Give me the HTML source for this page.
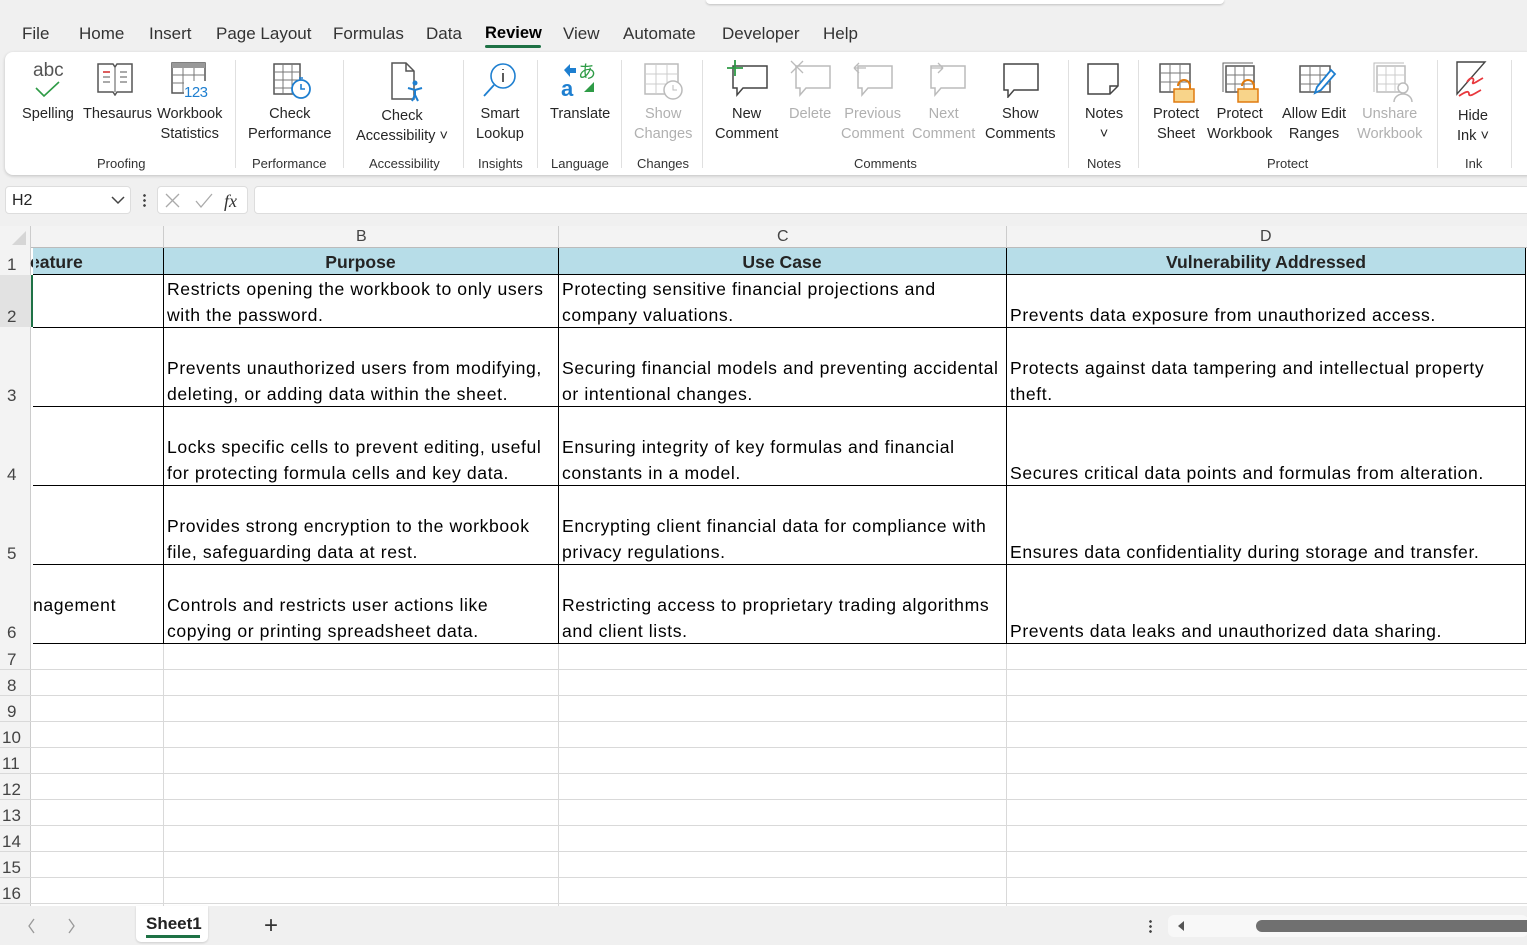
<!DOCTYPE html>
<html><head><meta charset="utf-8">
<style>
*{box-sizing:border-box;margin:0;padding:0}
body{width:1527px;height:945px;overflow:hidden;background:#f0f0f0;font-family:"Liberation Sans",sans-serif;position:relative;color:#242424}
.a{position:absolute}
.tab{position:absolute;top:24px;font-size:17px;color:#333}
.rb{position:absolute;left:5px;top:52px;width:1530px;height:123px;background:#fff;border-radius:8px;box-shadow:0 1px 3px rgba(0,0,0,.2)}
.lbl{position:absolute;font-size:14.6px;line-height:20px;text-align:center;color:#262626;white-space:nowrap}
.dis{color:#b0b0b0}
.grp{position:absolute;top:156px;font-size:13px;color:#333;text-align:center;white-space:nowrap}
.sep{position:absolute;top:60px;width:1px;height:108px;background:#e0e0e0}
.ic{position:absolute;top:58px}
.cell{position:absolute;font-family:"Liberation Sans",sans-serif;font-size:17.6px;letter-spacing:0.6px;line-height:26px;padding-left:4px;display:flex;flex-direction:column;justify-content:flex-end;padding-bottom:0;white-space:nowrap;overflow:hidden;color:#000}
.rh{position:absolute;left:0;width:31px;font-size:17px;color:#444;padding-left:7px;display:flex;align-items:flex-end;padding-bottom:0}
.hl{position:absolute;height:1px;background:#d9d9d9}
.vl{position:absolute;width:1px;background:#d9d9d9}
</style></head><body>
<div class="a" style="left:706px;top:0;width:518px;height:4px;background:#fff;border-radius:0 0 4px 4px;box-shadow:0 1px 2px rgba(0,0,0,.2)"></div>
<div class="tab" style="left:22px">File</div>
<div class="tab" style="left:79px">Home</div>
<div class="tab" style="left:149px">Insert</div>
<div class="tab" style="left:216px">Page Layout</div>
<div class="tab" style="left:333px">Formulas</div>
<div class="tab" style="left:426px">Data</div>
<div class="tab" style="left:485px;color:#000;font-weight:bold;font-size:16.5px">Review</div>
<div class="a" style="left:485px;top:45px;width:56px;height:3px;background:#1e7145;border-radius:2px"></div>
<div class="tab" style="left:563px">View</div>
<div class="tab" style="left:623px">Automate</div>
<div class="tab" style="left:722px">Developer</div>
<div class="tab" style="left:823px">Help</div>

<div class="rb"></div>
<div class="a" style="left:33px;top:60px;font-size:19px;color:#555">abc</div>
<svg class="ic" style="left:34px;top:80px" width="28" height="20"><path d="M2 8 L10 16 L25 2" stroke="#2e9b46" stroke-width="1.6" fill="none"/></svg>
<svg class="ic" style="left:96px;top:62px" width="38" height="34"><path d="M2 2h15l2 3 2-3h15v28H21l-2 3-2-3H2z" fill="#fff" stroke="#555" stroke-width="1.5"/><path d="M19 5v25" stroke="#555"/><path d="M7 10h7M7 15h7M7 20h7M24 10h7M24 15h7M24 20h7" stroke="#777" stroke-width="1.3"/><path d="M7 10h7" stroke="#d33" stroke-width="1.5"/></svg>
<svg class="ic" style="left:170px;top:61px" width="40" height="38"><rect x="2" y="2" width="33" height="30" fill="#fff" stroke="#555" stroke-width="1.5"/><rect x="2" y="2" width="33" height="5" fill="#999"/><path d="M2 14h33M2 22h33M13 7v25M24 7v25" stroke="#777"/><rect x="14" y="20" width="26" height="16" fill="#fff"/><text x="14" y="36" font-size="15" fill="#1e7fd0" font-family="Liberation Sans" textLength="24">123</text></svg>
<svg class="ic" style="left:272px;top:62px" width="40" height="40"><rect x="2" y="2" width="26" height="30" fill="#fff" stroke="#555" stroke-width="1.5"/><path d="M2 10h26M2 18h26M2 26h26M11 2v30M20 2v30" stroke="#777"/><circle cx="29" cy="27" r="9" fill="#fff" stroke="#1e7fd0" stroke-width="1.8"/><path d="M29 22v5h4M27 16h4" stroke="#1e7fd0" stroke-width="1.6" fill="none"/></svg>
<svg class="ic" style="left:390px;top:61px" width="36" height="42"><path d="M2 2h14l8 8v28H2z" fill="#fff" stroke="#555" stroke-width="1.5"/><path d="M16 2v8h8" fill="none" stroke="#555" stroke-width="1.5"/><circle cx="25" cy="22" r="2.5" fill="#1e7fd0"/><path d="M18 27l7 2 7-2M25 29v5l-3 6M25 34l3 6" stroke="#1e7fd0" stroke-width="2" fill="none"/></svg>
<svg class="ic" style="left:481px;top:60px" width="40" height="40"><circle cx="22" cy="16" r="12" fill="#fff" stroke="#1e7fd0" stroke-width="1.6"/><path d="M22 13v9M22 9v1" stroke="#333" stroke-width="1.6"/><path d="M13 25L3 36" stroke="#1e7fd0" stroke-width="1.8"/></svg>
<svg class="ic" style="left:560px;top:60px" width="40" height="40"><path d="M4 10l6-6v4h6v5h-6v4z" fill="#1e7fd0"/><text x="1" y="36" font-size="22" font-weight="bold" fill="#1e7fd0" font-family="Liberation Sans">a</text><text x="18" y="18" font-size="18" fill="#2e9b46" font-family="Noto Sans CJK JP">あ</text><path d="M34 22v10h-10z" fill="#2e9b46"/></svg>
<svg class="ic" style="left:643px;top:62px" width="40" height="40"><rect x="2" y="2" width="33" height="30" fill="#fff" stroke="#bbb" stroke-width="1.5"/><path d="M2 12h33M2 22h33M13 2v30M24 2v30" stroke="#ccc"/><circle cx="30" cy="28" r="9" fill="#fff" stroke="#bbb" stroke-width="1.5"/><path d="M30 23v5h4" stroke="#bbb" fill="none"/></svg>
<svg class="ic" style="left:727px;top:60px" width="42" height="38"><path d="M6 6h34v22H16l-6 7v-7H6z" fill="#fff" stroke="#444" stroke-width="1.5"/><path d="M8 0v16M0 8h16" stroke="#2e9b46" stroke-width="1.8"/></svg>
<svg class="ic" style="left:790px;top:60px" width="42" height="38"><path d="M6 6h34v22H16l-6 7v-7H6z" fill="#fff" stroke="#bbb" stroke-width="1.5"/><path d="M1 1l12 12M13 1L1 13" stroke="#bbb" stroke-width="1.3"/></svg>
<svg class="ic" style="left:852px;top:60px" width="42" height="38"><path d="M6 6h34v22H16l-6 7v-7H6z" fill="#fff" stroke="#bbb" stroke-width="1.5"/><path d="M2 8h12M2 8l5-5M2 8l5 5" stroke="#bbb" stroke-width="1.3" fill="none"/></svg>
<svg class="ic" style="left:925px;top:60px" width="42" height="38"><path d="M6 6h34v22H16l-6 7v-7H6z" fill="#fff" stroke="#bbb" stroke-width="1.5"/><path d="M6 8h12M18 8l-5-5M18 8l-5 5" stroke="#bbb" stroke-width="1.3" fill="none"/></svg>
<svg class="ic" style="left:1000px;top:60px" width="42" height="38"><path d="M4 4h34v26H14l-6 7v-7H4z" fill="#fff" stroke="#444" stroke-width="1.5"/></svg>
<svg class="ic" style="left:1086px;top:62px" width="36" height="36"><path d="M2 2h30v22l-8 8H2z" fill="#fff" stroke="#444" stroke-width="1.5"/><path d="M32 24h-8v8" fill="none" stroke="#444" stroke-width="1.5"/></svg>
<svg class="ic" style="left:1158px;top:62px" width="40" height="42"><rect x="2" y="2" width="30" height="28" fill="#fff" stroke="#555" stroke-width="1.5"/><path d="M2 11h30M2 20h30M12 2v28M22 2v28" stroke="#777"/><path d="M20 24a6 6 0 0112 0v4" fill="none" stroke="#e07b10" stroke-width="2"/><rect x="16" y="27" width="20" height="13" fill="#f8d48a" stroke="#e07b10" stroke-width="1.5"/></svg>
<svg class="ic" style="left:1222px;top:62px" width="40" height="42"><path d="M1 30V1h30" fill="none" stroke="#666"/><rect x="4" y="4" width="28" height="26" fill="#fff" stroke="#555" stroke-width="1.5"/><path d="M4 13h28M4 22h28M13 4v26M22 4v26" stroke="#777"/><path d="M20 24a6 6 0 0112 0v4" fill="none" stroke="#e07b10" stroke-width="2"/><rect x="16" y="27" width="20" height="13" fill="#f8d48a" stroke="#e07b10" stroke-width="1.5"/></svg>
<svg class="ic" style="left:1298px;top:62px" width="40" height="42"><rect x="2" y="4" width="30" height="26" fill="#fff" stroke="#555" stroke-width="1.5"/><path d="M2 13h30M2 22h30M12 4v26M22 4v26" stroke="#777"/><path d="M33 8l4 4-14 16-6 3 2-6z" fill="#fff" stroke="#1e7fd0" stroke-width="1.8"/></svg>
<svg class="ic" style="left:1373px;top:62px" width="40" height="42"><path d="M1 30V1h30" fill="none" stroke="#bbb"/><rect x="4" y="4" width="28" height="26" fill="#fff" stroke="#bbb" stroke-width="1.5"/><path d="M4 13h28M4 22h28M13 4v26M22 4v26" stroke="#ccc"/><circle cx="30" cy="26" r="5" fill="#fff" stroke="#bbb" stroke-width="1.5"/><path d="M21 40a9 8 0 0118 0" fill="#fff" stroke="#bbb" stroke-width="1.5"/></svg>
<svg class="ic" style="left:1455px;top:60px" width="40" height="40"><path d="M2 2h28L2 34z" fill="#fff" stroke="#444" stroke-width="1.4"/><path d="M12 22c4-6 8-4 6 0s6-2 10-4M4 36c6-4 10-6 10-2s8-2 12-4" stroke="#e8383d" stroke-width="1.8" fill="none"/></svg>

<div class="lbl" style="left:22px;top:104px">Spelling</div>
<div class="lbl" style="left:83px;top:104px">Thesaurus</div>
<div class="lbl" style="left:157px;top:104px">Workbook<br>Statistics</div>
<div class="lbl" style="left:248px;top:104px">Check<br>Performance</div>
<div class="lbl" style="left:356px;top:106px">Check<br>Accessibility ˅</div>
<div class="lbl" style="left:476px;top:104px">Smart<br>Lookup</div>
<div class="lbl" style="left:550px;top:104px">Translate</div>
<div class="lbl dis" style="left:634px;top:104px">Show<br>Changes</div>
<div class="lbl" style="left:715px;top:104px">New<br>Comment</div>
<div class="lbl dis" style="left:789px;top:104px">Delete</div>
<div class="lbl dis" style="left:841px;top:104px">Previous<br>Comment</div>
<div class="lbl dis" style="left:912px;top:104px">Next<br>Comment</div>
<div class="lbl" style="left:985px;top:104px">Show<br>Comments</div>
<div class="lbl" style="left:1085px;top:104px">Notes<br>˅</div>
<div class="lbl" style="left:1153px;top:104px">Protect<br>Sheet</div>
<div class="lbl" style="left:1207px;top:104px">Protect<br>Workbook</div>
<div class="lbl" style="left:1282px;top:104px">Allow Edit<br>Ranges</div>
<div class="lbl dis" style="left:1357px;top:104px">Unshare<br>Workbook</div>
<div class="lbl" style="left:1457px;top:106px">Hide<br>Ink ˅</div>

<div class="grp" style="left:97px">Proofing</div>
<div class="grp" style="left:252px">Performance</div>
<div class="grp" style="left:369px">Accessibility</div>
<div class="grp" style="left:478px">Insights</div>
<div class="grp" style="left:551px">Language</div>
<div class="grp" style="left:637px">Changes</div>
<div class="grp" style="left:854px">Comments</div>
<div class="grp" style="left:1087px">Notes</div>
<div class="grp" style="left:1267px">Protect</div>
<div class="grp" style="left:1465px">Ink</div>
<div class="sep" style="left:235px"></div><div class="sep" style="left:343px"></div><div class="sep" style="left:463px"></div><div class="sep" style="left:537px"></div><div class="sep" style="left:621px"></div><div class="sep" style="left:702px"></div><div class="sep" style="left:1068px"></div><div class="sep" style="left:1138px"></div><div class="sep" style="left:1437px"></div><div class="sep" style="left:1511px"></div>

<div class="a" style="left:5px;top:186px;width:126px;height:28px;background:#fff;border:1px solid #ddd;border-radius:4px;font-size:16px;padding:5px 6px">H2</div>
<svg class="a" style="left:110px;top:194px" width="16" height="12"><path d="M2 3l6 6 6-6" stroke="#444" stroke-width="1.5" fill="none"/></svg>
<div class="a" style="left:143px;top:193px;width:3px;height:14px;background:radial-gradient(circle,#444 1.2px,transparent 1.5px) 0 0/3px 5px"></div>
<div class="a" style="left:157px;top:186px;width:91px;height:28px;background:#fff;border:1px solid #ddd;border-radius:4px"></div>
<svg class="a" style="left:163px;top:191px" width="80" height="20"><path d="M3 3l13 13M16 3L3 16" stroke="#aaa" stroke-width="1.3"/><path d="M33 10l5 6 11-13" stroke="#aaa" stroke-width="1.3" fill="none"/><text x="61" y="16" font-size="18" font-style="italic" font-family="Liberation Serif" fill="#333">fx</text></svg>
<div class="a" style="left:254px;top:186px;width:1280px;height:28px;background:#fff;border:1px solid #ddd;border-radius:4px"></div>

<div class="a" style="left:0;top:226px;width:1527px;height:680px;background:#fff"></div>
<div class="a" style="left:0;top:226px;width:1527px;height:22px;background:#f3f3f3;border-bottom:1px solid #bbb"></div>
<div class="a" style="left:0;top:226px;width:31px;height:680px;background:#f3f3f3;border-right:1px solid #ccc"></div>
<svg class="a" style="left:10px;top:230px" width="18" height="16"><path d="M16 1v14H2z" fill="#d6d6d6"/></svg>
<div class="a" style="left:356px;top:228px;font-size:16px;color:#444">B</div>
<div class="a" style="left:777px;top:228px;font-size:16px;color:#444">C</div>
<div class="a" style="left:1260px;top:228px;font-size:16px;color:#444">D</div>
<div class="vl" style="left:163px;top:226px;height:22px;background:#ccc"></div>
<div class="vl" style="left:558px;top:226px;height:22px;background:#ccc"></div>
<div class="vl" style="left:1006px;top:226px;height:22px;background:#ccc"></div>
<div class="a" style="left:0;top:275px;width:31px;height:52px;background:#e2e2e2"></div>
<div class="a" style="left:31px;top:275px;width:2px;height:52px;background:#1e7145"></div>

<div class="vl" style="left:163px;top:643px;height:263px"></div>
<div class="vl" style="left:558px;top:643px;height:263px"></div>
<div class="vl" style="left:1006px;top:643px;height:263px"></div>
<div class="hl" style="left:0;top:669px;width:1527px"></div><div class="hl" style="left:0;top:695px;width:1527px"></div><div class="hl" style="left:0;top:721px;width:1527px"></div><div class="hl" style="left:0;top:747px;width:1527px"></div><div class="hl" style="left:0;top:773px;width:1527px"></div><div class="hl" style="left:0;top:799px;width:1527px"></div><div class="hl" style="left:0;top:825px;width:1527px"></div><div class="hl" style="left:0;top:851px;width:1527px"></div><div class="hl" style="left:0;top:877px;width:1527px"></div><div class="hl" style="left:0;top:903px;width:1527px"></div>

<div class="a" style="left:33px;top:248px;width:1493px;height:27px;background:#b7dde8;border-bottom:1px solid #000"></div>
<div class="a" style="left:30px;top:252px;font-weight:bold;font-size:17.6px">eature</div>
<div class="a" style="left:33px;top:248px;width:3px;height:26px;background:#b7dde8"></div>
<div class="a" style="left:163px;top:252px;width:395px;text-align:center;font-weight:bold;font-size:17.6px">Purpose</div>
<div class="a" style="left:558px;top:252px;width:448px;text-align:center;font-weight:bold;font-size:17.6px">Use Case</div>
<div class="a" style="left:1006px;top:252px;width:520px;text-align:center;font-weight:bold;font-size:17.6px">Vulnerability Addressed</div>
<div class="a" style="left:163px;top:248px;width:1px;height:395px;background:#000"></div>
<div class="a" style="left:558px;top:248px;width:1px;height:395px;background:#000"></div>
<div class="a" style="left:1006px;top:248px;width:1px;height:395px;background:#000"></div>
<div class="a" style="left:1525px;top:248px;width:1px;height:395px;background:#000"></div>
<div class="a" style="left:33px;top:327px;width:1493px;height:1px;background:#000"></div>
<div class="a" style="left:33px;top:406px;width:1493px;height:1px;background:#000"></div>
<div class="a" style="left:33px;top:485px;width:1493px;height:1px;background:#000"></div>
<div class="a" style="left:33px;top:564px;width:1493px;height:1px;background:#000"></div>
<div class="a" style="left:33px;top:643px;width:1493px;height:1px;background:#000"></div>

<div class="rh" style="top:248px;height:27px">1</div>
<div class="rh" style="top:275px;height:52px">2</div>
<div class="rh" style="top:328px;height:78px">3</div>
<div class="rh" style="top:407px;height:78px">4</div>
<div class="rh" style="top:486px;height:78px">5</div>
<div class="rh" style="top:565px;height:78px">6</div>
<div class="rh" style="top:644px;height:26px">7</div>
<div class="rh" style="top:670px;height:26px">8</div>
<div class="rh" style="top:696px;height:26px">9</div>
<div class="rh" style="top:722px;height:26px;padding-left:2px">10</div>
<div class="rh" style="top:748px;height:26px;padding-left:2px">11</div>
<div class="rh" style="top:774px;height:26px;padding-left:2px">12</div>
<div class="rh" style="top:800px;height:26px;padding-left:2px">13</div>
<div class="rh" style="top:826px;height:26px;padding-left:2px">14</div>
<div class="rh" style="top:852px;height:26px;padding-left:2px">15</div>
<div class="rh" style="top:878px;height:26px;padding-left:2px">16</div>

<div class="cell" style="left:163px;top:275px;width:395px;height:53px"><div>Restricts opening the workbook to only users</div><div>with the password.</div></div>
<div class="cell" style="left:558px;top:275px;width:448px;height:53px"><div>Protecting sensitive financial projections and</div><div>company valuations.</div></div>
<div class="cell" style="left:1006px;top:275px;width:519px;height:53px"><div>Prevents data exposure from unauthorized access.</div></div>

<div class="cell" style="left:163px;top:328px;width:395px;height:79px"><div>Prevents unauthorized users from modifying,</div><div>deleting, or adding data within the sheet.</div></div>
<div class="cell" style="left:558px;top:328px;width:448px;height:79px"><div>Securing financial models and preventing accidental</div><div>or intentional changes.</div></div>
<div class="cell" style="left:1006px;top:328px;width:519px;height:79px"><div>Protects against data tampering and intellectual property</div><div>theft.</div></div>

<div class="cell" style="left:163px;top:407px;width:395px;height:79px"><div>Locks specific cells to prevent editing, useful</div><div>for protecting formula cells and key data.</div></div>
<div class="cell" style="left:558px;top:407px;width:448px;height:79px"><div>Ensuring integrity of key formulas and financial</div><div>constants in a model.</div></div>
<div class="cell" style="left:1006px;top:407px;width:519px;height:79px"><div>Secures critical data points and formulas from alteration.</div></div>

<div class="cell" style="left:163px;top:486px;width:395px;height:79px"><div>Provides strong encryption to the workbook</div><div>file, safeguarding data at rest.</div></div>
<div class="cell" style="left:558px;top:486px;width:448px;height:79px"><div>Encrypting client financial data for compliance with</div><div>privacy regulations.</div></div>
<div class="cell" style="left:1006px;top:486px;width:519px;height:79px"><div>Ensures data confidentiality during storage and transfer.</div></div>

<div class="cell" style="left:29px;top:565px;width:134px;height:79px;padding-bottom:26px"><div>nagement</div></div>
<div class="cell" style="left:163px;top:565px;width:395px;height:79px"><div>Controls and restricts user actions like</div><div>copying or printing spreadsheet data.</div></div>
<div class="cell" style="left:558px;top:565px;width:448px;height:79px"><div>Restricting access to proprietary trading algorithms</div><div>and client lists.</div></div>
<div class="cell" style="left:1006px;top:565px;width:519px;height:79px"><div>Prevents data leaks and unauthorized data sharing.</div></div>

<div class="a" style="left:0;top:906px;width:1527px;height:39px;background:#f0f0f0"></div>
<svg class="a" style="left:24px;top:917px" width="60" height="18"><path d="M10 2L5 9l5 7M45 2l5 7-5 7" stroke="#999" stroke-width="1.3" fill="none"/></svg>
<div class="a" style="left:136px;top:906px;width:72px;height:36px;background:#fff;border-radius:0 0 5px 5px;box-shadow:0 1px 2px rgba(0,0,0,.15)"></div>
<div class="a" style="left:146px;top:914px;font-size:17px;font-weight:bold;color:#222">Sheet1</div>
<div class="a" style="left:146px;top:935px;width:54px;height:3px;background:#1e7145"></div>
<div class="a" style="left:264px;top:912px;font-size:24px;color:#333">+</div>
<div class="a" style="left:1149px;top:919px;width:3px;height:15px;background:radial-gradient(circle,#444 1.2px,transparent 1.5px) 0 0/3px 5px"></div>
<div class="a" style="left:1168px;top:915px;width:360px;height:22px;background:#f8f8f8;border-radius:6px"></div>
<svg class="a" style="left:1175px;top:919px" width="12" height="14"><path d="M9 2L3 7l6 5z" fill="#555"/></svg>
<div class="a" style="left:1256px;top:920px;width:280px;height:12px;background:#707070;border-radius:6px"></div>
</body></html>
